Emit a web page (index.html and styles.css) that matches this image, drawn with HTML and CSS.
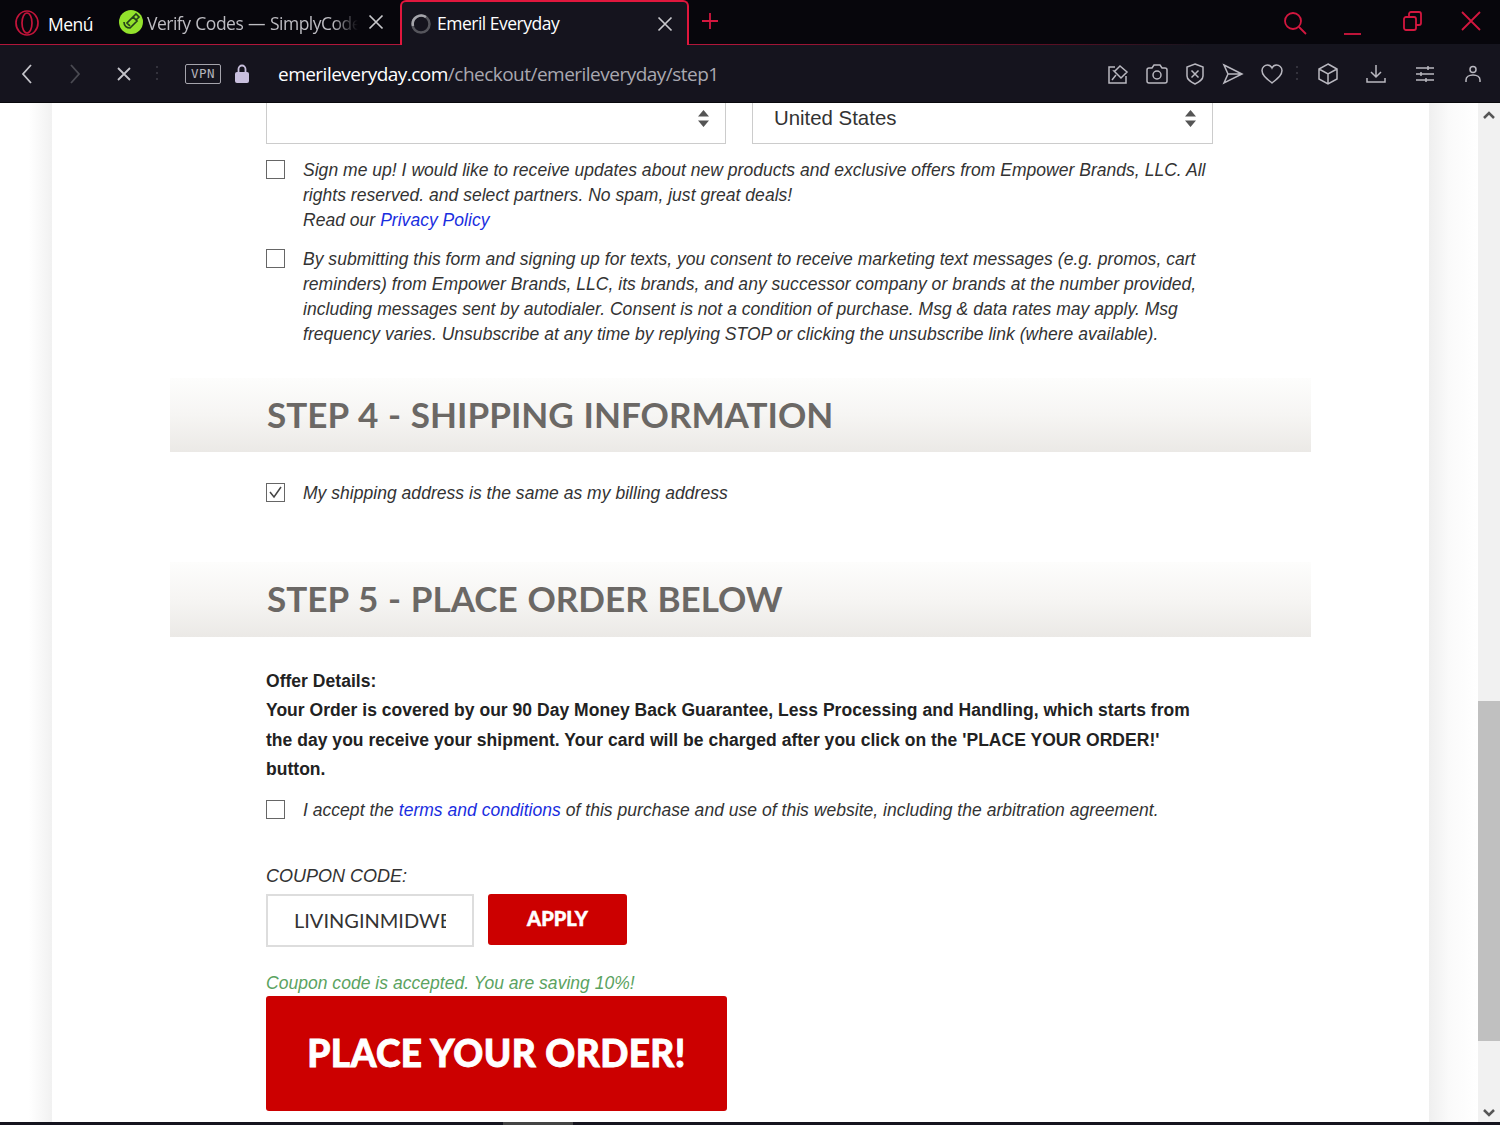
FILE: index.html
```html
<!DOCTYPE html>
<html lang="en">
<head>
    <meta charset="UTF-8">
    <title>Emeril Everyday</title>
    <link rel="stylesheet" href="styles.css">
</head>
<body>
    <div class="tabstrip">
        <div class="menu">
            <svg class="opera" width="26" height="26" viewBox="0 0 26 26"><ellipse cx="13" cy="13" rx="11" ry="12"/><ellipse cx="13" cy="13" rx="5" ry="10"/></svg>
            <span>Menú</span>
        </div>
        <div class="tab">
            <svg class="favicon" width="24" height="24" viewBox="0 0 24 24"><circle cx="12" cy="12" r="12" fill="#93e22c"/><path d="M5 12c0 4 3 6 6 6l7-7-4-4-6 6 3 3M14 7l3-3 3 3-3 3" fill="none" stroke="#24401a" stroke-width="1.700"/></svg>
            <span class="tab-title fade">Verify Codes — SimplyCode</span>
            <svg class="tab-x" width="16" height="16" viewBox="0 0 16 16"><path d="M1.500 1.500l13 13M14.500 1.500l-13 13"/></svg>
        </div>
        <div class="tab active">
            <svg class="spinner" width="22" height="22" viewBox="0 0 22 22"><circle cx="11" cy="11" r="8.500"/><path d="M3 13a8.500 8.500 0 0 1 13-9"/></svg>
            <span class="tab-title">Emeril Everyday</span>
            <svg class="tab-x" width="16" height="16" viewBox="0 0 16 16"><path d="M1.500 1.500l13 13M14.500 1.500l-13 13"/></svg>
        </div>
        <svg class="plus" width="18" height="18" viewBox="0 0 18 18"><path d="M9 1v16M1 9h16"/></svg>
        <div class="winctl">
            <svg width="24" height="24" viewBox="0 0 24 24"><circle cx="10" cy="10" r="8"/><path d="M16 16l7 7"/></svg>
            <svg class="min" width="20" height="24" viewBox="0 0 20 24"><path d="M1 23h17"/></svg>
            <svg width="20" height="20" viewBox="0 0 20 20"><rect x="1" y="6" width="12" height="13" rx="2"/><path d="M6 6V3a2 2 0 0 1 2-2h8a2 2 0 0 1 2 2v9a2 2 0 0 1-2 2h-3"/></svg>
            <svg width="20" height="20" viewBox="0 0 20 20"><path d="M1 1l18 18M19 1L1 19"/></svg>
        </div>
    </div>

    <div class="addressbar">
        <svg class="nav" width="14" height="20" viewBox="0 0 14 20"><path d="M11 1L3 10l8 9"/></svg>
        <svg class="nav dim" width="14" height="20" viewBox="0 0 14 20"><path d="M3 1l8 9-8 9"/></svg>
        <svg class="nav stop" width="16" height="16" viewBox="0 0 16 16"><path d="M2 2l12 12M14 2L2 14"/></svg>
        <span class="dots"></span>
        <span class="vpn">VPN</span>
        <svg class="lock" width="14" height="19" viewBox="0 0 14 19"><rect y="8" width="14" height="11" rx="2" fill="#c9c0de"/><path d="M3.500 8V5a3.500 3.500 0 0 1 7 0v3" fill="none" stroke="#c9c0de" stroke-width="1.800"/></svg>
        <div class="url"><b>emerileveryday.com</b>/checkout/emerileveryday/step1</div>
        <div class="tools">
            <svg width="22" height="22" viewBox="0 0 22 22"><path d="M8 4H2v16h17v-7M5 17l4-5M8 8l5-5 7 6-5 5-1 1-7-7z"/></svg>
            <svg width="22" height="20" viewBox="0 0 22 20"><path d="M3 4h3l2-3h6l2 3h3a2 2 0 0 1 2 2v11a2 2 0 0 1-2 2H3a2 2 0 0 1-2-2V6a2 2 0 0 1 2-2z"/><circle cx="11" cy="11" r="4"/></svg>
            <svg width="20" height="22" viewBox="0 0 20 22"><path d="M10 1l8 3v9c0 4-4 6-8 8-4-2-8-4-8-8V4zM6.500 7.500l7 7M13.500 7.500l-7 7"/></svg>
            <svg class="send" width="22" height="22" viewBox="0 0 22 22"><path d="M2 2l18 9-18 9 4-9zM6 11h14"/></svg>
            <svg width="22" height="20" viewBox="0 0 22 20"><path d="M11 19C5 14 1 11 1 6.500 1 3 4 1 6.500 1 8.500 1 10 2 11 4c1-2 2.500-3 4.500-3C18 1 21 3 21 6.500 21 11 17 14 11 19z"/></svg>
            <span class="dots"></span>
            <svg class="cube" width="22" height="22" viewBox="0 0 22 22"><path d="M11 1l9 5v10l-9 5-9-5V6zM2 6l9 5 9-5M11 11v10"/></svg>
            <svg class="dl" width="20" height="20" viewBox="0 0 20 20"><path d="M10 1v12M5 8l5 5 5-5M1 14v4h18v-4"/></svg>
            <svg class="sliders" width="20" height="18" viewBox="0 0 20 18"><path d="M1 3h18M1 9h18M1 15h18M13 1v4M6 7v4M11 13v4"/></svg>
            <svg class="user" width="16" height="18" viewBox="0 0 16 18"><circle cx="8" cy="4.500" r="3"/><path d="M1 17v-2c0-3 3-5 7-5s7 2 7 5v2"/></svg>
        </div>
    </div>

    <div class="viewport">
        <div class="gutter left"></div>
        <main class="sheet">
            <div class="selects">
                <div class="select">
                    <span></span>
                    <svg class="arrows" width="11" height="17" viewBox="0 0 11 17"><path d="M5.500 0L11 6.500H0zM0 10.500h11L5.500 17z"/></svg>
                </div>
                <div class="select">
                    <span>United States</span>
                    <svg class="arrows" width="11" height="17" viewBox="0 0 11 17"><path d="M5.500 0L11 6.500H0zM0 10.500h11L5.500 17z"/></svg>
                </div>
            </div>

            <div class="check-row first">
                <span class="box"></span>
                <p>Sign me up! I would like to receive updates about new products and exclusive offers from Empower Brands, LLC. All rights reserved. and select partners. No spam, just great deals!<br>Read our <a href="#">Privacy Policy</a></p>
            </div>
            <div class="check-row second">
                <span class="box"></span>
                <p>By submitting this form and signing up for texts, you consent to receive marketing text messages (e.g. promos, cart reminders) from Empower Brands, LLC, its brands, and any successor company or brands at the number provided, including messages sent by autodialer. Consent is not a condition of purchase. Msg &amp; data rates may apply. Msg frequency varies. Unsubscribe at any time by replying STOP or clicking the unsubscribe link (where available).</p>
            </div>

            <h2 class="step step4">STEP 4 - SHIPPING INFORMATION</h2>
            <div class="check-row same">
                <span class="box">
                    <svg width="15" height="13" viewBox="0 0 15 13"><path d="M2 6l4 5 7-10" fill="none" stroke="#444" stroke-width="1.500"/></svg>
                </span>
                <p>My shipping address is the same as my billing address</p>
            </div>

            <h2 class="step step5">STEP 5 - PLACE ORDER BELOW</h2>
            <div class="offer">
                <div>Offer Details:</div>
                Your Order is covered by our 90 Day Money Back Guarantee, Less Processing and Handling, which starts from the day you receive your shipment. Your card will be charged after you click on the 'PLACE YOUR ORDER!' button.
            </div>
            <div class="check-row terms">
                <span class="box"></span>
                <p>I accept the <a href="#">terms and conditions</a> of this purchase and use of this website, including the arbitration agreement.</p>
            </div>

            <label class="coupon-label">COUPON CODE:</label>
            <div class="coupon">
                <div class="coupon-input"><span>LIVINGINMIDWEST</span></div>
                <button class="apply">APPLY</button>
            </div>
            <p class="accepted">Coupon code is accepted. You are saving 10%!</p>
            <button class="place">PLACE YOUR ORDER!</button>
        </main>
        <div class="gutter right"></div>
        <div class="scrollbar">
            <svg width="12" height="8" viewBox="0 0 12 8"><path d="M1 7l5-5 5 5"/></svg>
            <div class="track"><div class="thumb"></div></div>
            <svg width="12" height="8" viewBox="0 0 12 8"><path d="M1 1l5 5 5-5"/></svg>
        </div>
    </div>
    <div class="taskbar"><span></span></div>
</body>
</html>
```

FILE: styles.css
```css
html, body {
    margin: 0;
    padding: 0;
    height: 1125px;
    overflow: hidden;
}
body {
    display: flex;
    flex-direction: column;
    background: #fff;
    font-family: "Liberation Sans", Arial, sans-serif;
    color: #222;
}
svg {
    display: block;
    flex: none;
}

/* tab strip */
.tabstrip {
    height: 45px;
    flex: none;
    display: flex;
    align-items: stretch;
    background: #07060c;
    color: #fff;
    font-family: "Open Sans", sans-serif;
    font-size: 17.500px;
    letter-spacing: -0.5px;
    box-sizing: border-box;
    border-bottom: 1px solid;
    border-image: linear-gradient(to right, #b0163a 0%, #b0163a 48%, #5a0f24 70%, #15141e 80%) 1;
}
.menu {
    width: 108px;
    display: flex;
    align-items: center;
    padding: 1px 0 0 14px;
    gap: 8px;
    box-sizing: border-box;
}
.menu span {
    padding-top: 2px;
}
.opera {
    fill: none;
    stroke: #c2143a;
    stroke-width: 1.700;
}
.tab {
    width: 292px;
    display: flex;
    align-items: center;
    padding: 0 16px 0 11px;
    box-sizing: border-box;
    color: #bdbcc2;
    gap: 4px;
}
.tab-title {
    flex: 1;
    white-space: nowrap;
    overflow: hidden;
    line-height: 24px;
}
.fade {
    -webkit-mask-image: linear-gradient(to right, #000 88%, transparent 100%);
    mask-image: linear-gradient(to right, #000 88%, transparent 100%);
    margin-right: 6px;
    word-spacing: 0.8px;
    padding-top: 2px;
}
.tab-x {
    fill: none;
    stroke: #c8c8cc;
    stroke-width: 1.700;
}
.tab.active {
    width: 289px;
    height: 45px;
    padding: 0 14px 0 8px;
    background: #15141e;
    color: #fff;
    border: 2px solid #e0173d;
    border-bottom: 0;
    border-radius: 6px 6px 0 0;
    gap: 5px;
}
.tab.active .tab-title {
    padding-bottom: 2px;
}
.spinner {
    fill: none;
    stroke-width: 2.500;
}
.spinner circle {
    stroke: #55555c;
}
.spinner path {
    stroke: #a5a5ab;
}
.plus {
    fill: none;
    stroke: #d3173f;
    stroke-width: 1.800;
    margin: 12px 0 0 12px;
}
.winctl {
    margin-left: auto;
    display: flex;
    align-items: flex-start;
    padding: 11px 19px 0 0;
    gap: 38px;
}
.winctl svg {
    fill: none;
    stroke: #d3173f;
    stroke-width: 1.800;
}
.winctl .min {
    margin: 0 2px 0 -2px;
}

/* address bar */
.addressbar {
    height: 58px;
    flex: none;
    box-sizing: border-box;
    display: flex;
    align-items: center;
    padding-left: 20px;
    background: #15141e;
    border-bottom: 1px solid #08080c;
    color: #a9a8b0;
}
.nav {
    fill: none;
    stroke: #c4c4ca;
    stroke-width: 1.800;
    margin-right: 34px;
}
.nav.dim {
    stroke: #4a4a52;
}
.nav.stop {
    margin-right: 24px;
}
.dots {
    width: 2px;
    height: 16px;
    margin-right: 27px;
    background: repeating-linear-gradient(to bottom, #33323c 0 2px, transparent 2px 6px);
}
.vpn {
    width: 36px;
    height: 20px;
    box-sizing: border-box;
    border: 1.500px solid #a5a4ac;
    border-radius: 2px;
    font: 12.500px/17px "DejaVu Sans Mono", monospace;
    letter-spacing: 0.5px;
    text-align: center;
    color: #b5b4bc;
}
.lock {
    margin: 0 0 0 14px;
}
.url {
    margin-left: 29px;
    font-family: "Open Sans", sans-serif;
    font-size: 19px;
    letter-spacing: -0.52px;
    white-space: nowrap;
}
.url b {
    font-weight: 400;
    color: #fff;
}
.tools {
    margin-left: auto;
    display: flex;
    align-items: center;
    gap: 17px;
    padding-right: 19px;
}
.tools svg {
    fill: none;
    stroke: #b9b8c0;
    stroke-width: 1.500;
}
.tools .dots {
    margin: 0 2px 0 -4px;
}
.tools .dl {
    margin-left: 10px;
}
.tools .sliders {
    margin-left: 12px;
}
.tools .user {
    margin-left: 13px;
}

/* page */
.viewport {
    flex: 1;
    min-height: 0;
    display: flex;
    overflow: hidden;
}
.gutter.left {
    width: 52px;
    background: linear-gradient(to right, #fff 0%, #fff 55%, #f1f1f1 100%);
}
.gutter.right {
    width: 49px;
    background: linear-gradient(to right, #efefef 0%, #fafafa 40%, #fff 100%);
}
.sheet {
    width: 1377px;
    box-sizing: border-box;
    padding: 0 0 0 214px;
    background: #fff;
}
.selects {
    display: flex;
    gap: 26px;
    width: 947px;
}
.select {
    width: 461px;
    height: 41px;
    box-sizing: border-box;
    border: 1px solid #ccc;
    border-top: 0;
    display: flex;
    align-items: center;
    justify-content: space-between;
    padding: 0 16px 10px 21px;
    font-size: 20.400px;
    color: #333;
}
.select:first-child {
    width: 460px;
}
.arrows {
    fill: #555;
}
.check-row {
    display: flex;
    gap: 18px;
    width: 945px;
}
.check-row p {
    margin: 0;
    font-style: italic;
    font-size: 17.500px;
    letter-spacing: 0.03px;
    line-height: 25px;
    color: #333;
}
.box {
    flex: none;
    width: 19px;
    height: 19px;
    margin-top: 2px;
    box-sizing: border-box;
    border: 1.500px solid #666;
    background: #fff;
    display: flex;
    align-items: center;
    justify-content: center;
}
.check-row.first {
    margin-top: 14px;
}
.check-row.second {
    margin-top: 14px;
}
.step {
    width: 1141px;
    height: 75px;
    box-sizing: border-box;
    margin: 0 0 0 -96px;
    padding-left: 97px;
    background: linear-gradient(to bottom, #fdfdfc 0%, #f6f5f3 50%, #ebe9e6 100%);
    font-family: Lato, sans-serif;
    font-weight: 700;
    font-size: 35.100px;
    word-spacing: 1.200px;
    line-height: 72px;
    color: #6b6865;
    white-space: nowrap;
}
.step4 {
    height: 74px;
    margin-top: 31px;
}
.check-row.same {
    margin-top: 29px;
}
.step5 {
    margin-top: 56px;
}
.offer {
    margin-top: 30px;
    width: 945px;
    font-weight: 700;
    font-size: 17.500px;
    letter-spacing: 0.03px;
    line-height: 29.300px;
    color: #222;
}
.check-row.terms {
    margin-top: 14px;
}
.coupon-label {
    display: block;
    margin-top: 41px;
    font-style: italic;
    font-size: 18px;
    line-height: 25px;
    color: #333;
}
.coupon {
    display: flex;
    gap: 15px;
    margin-top: 5px;
}
.coupon-input {
    width: 208px;
    height: 53px;
    box-sizing: border-box;
    border: 2px solid #ddd;
    padding: 0 26px;
    overflow: hidden;
    white-space: nowrap;
    font-family: Lato, sans-serif;
    font-size: 20px;
    line-height: 49px;
    color: #333;
}
.coupon-input span {
    display: block;
    overflow: hidden;
}
.apply, .place {
    display: block;
    border: 0;
    background: #cc0000;
    color: #fff;
    font-family: Lato, sans-serif;
    font-weight: 900;
    border-radius: 3px;
    padding: 0;
    -webkit-text-stroke: 0.5px #fff;
}
.apply {
    width: 139px;
    height: 51px;
    margin-left: -1px;
    font-size: 20px;
    padding-bottom: 3px;
}
.accepted {
    margin: 23px 0 0;
    font-style: italic;
    font-size: 17.500px;
    letter-spacing: 0.03px;
    line-height: 26px;
    color: #5ba35f;
}
.place {
    width: 461px;
    height: 115px;
    margin-top: 0;
    font-size: 37px;
    letter-spacing: 0.4px;
    padding-bottom: 3px;
    -webkit-text-stroke: 0.8px #fff;
}

/* scrollbar */
.scrollbar {
    width: 22px;
    background: #f1f1f1;
    display: flex;
    flex-direction: column;
    align-items: center;
    padding-top: 8px;
    box-sizing: border-box;
}
.scrollbar svg {
    fill: none;
    stroke: #555;
    stroke-width: 2.500;
}
.track {
    flex: 1;
    width: 100%;
    display: flex;
    flex-direction: column;
    justify-content: flex-end;
    padding-bottom: 68px;
    box-sizing: border-box;
}
.thumb {
    height: 340px;
    background: #c0c0c0;
}
.scrollbar svg:last-child {
    margin: 0 0 5px;
}
.taskbar {
    height: 3px;
    flex: none;
    background: #15141e;
    position: relative;
}
.taskbar span {
    position: absolute;
    left: 503px;
    width: 70px;
    height: 3px;
    background: #444;
}
a {
    color: #1a2ee0;
    text-decoration: none;
}
```
